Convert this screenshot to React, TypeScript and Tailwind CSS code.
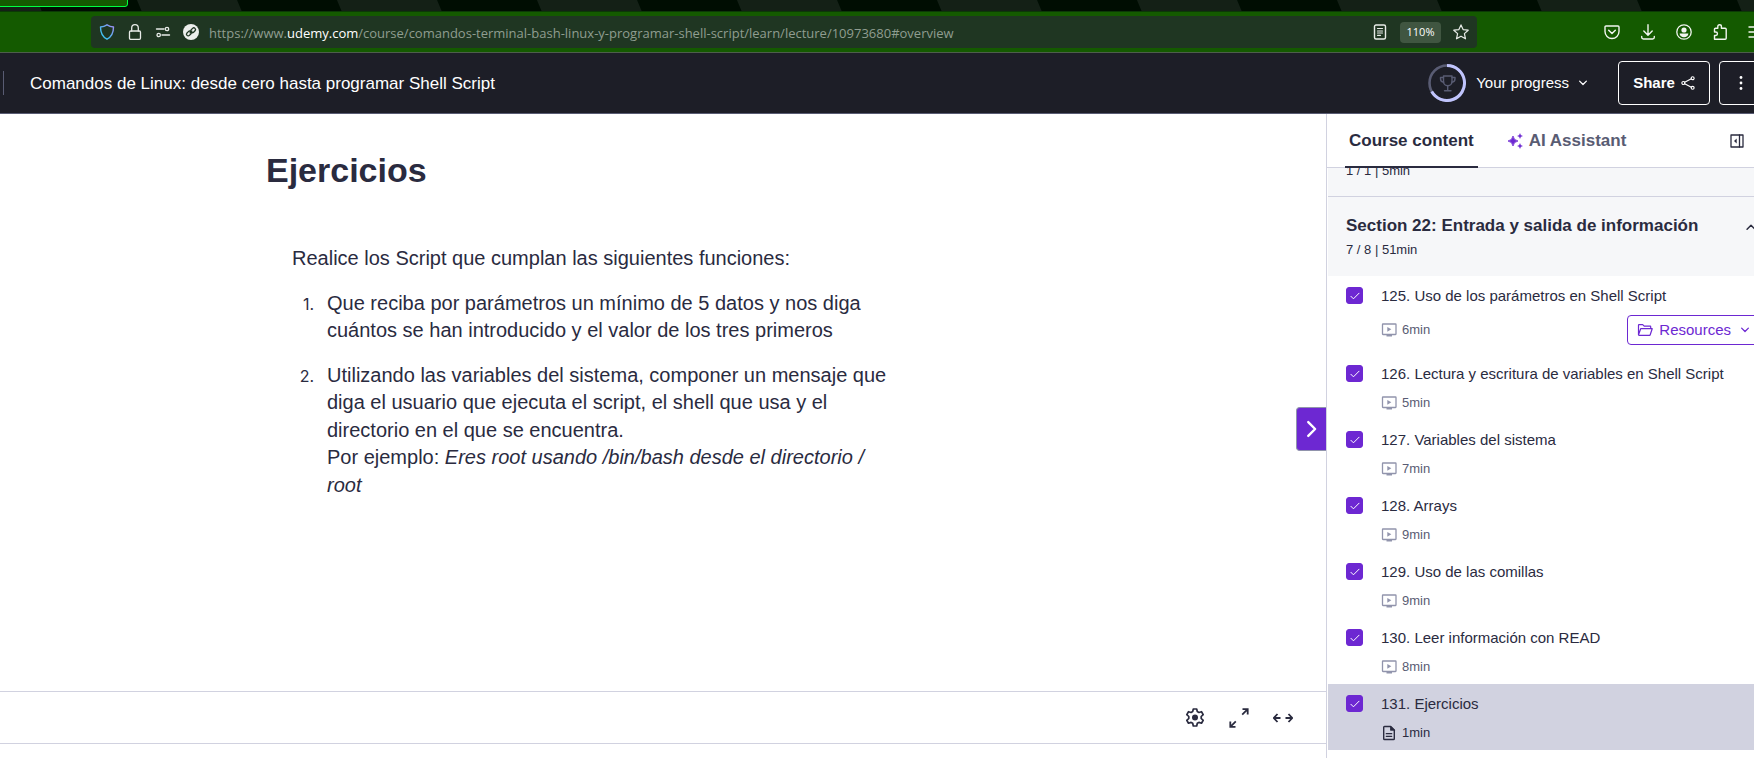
import type { ReactNode } from "react";

type Lecture = {
  id: number;
  title: string;
  minutes: number;
  kind: "video" | "article";
  resources?: boolean;
  current?: boolean;
};

const lectures: Lecture[] = [
  { id: 125, title: "Uso de los parámetros en Shell Script", minutes: 6, kind: "video", resources: true },
  { id: 126, title: "Lectura y escritura de variables en Shell Script", minutes: 5, kind: "video" },
  { id: 127, title: "Variables del sistema", minutes: 7, kind: "video" },
  { id: 128, title: "Arrays", minutes: 9, kind: "video" },
  { id: 129, title: "Uso de las comillas", minutes: 9, kind: "video" },
  { id: 130, title: "Leer información con READ", minutes: 8, kind: "video" },
  { id: 131, title: "Ejercicios", minutes: 1, kind: "article", current: true },
];

function Icon({ className, children, box = 16 }: { className: string; children: ReactNode; box?: number }) {
  return (
    <svg
      className={className}
      viewBox={`0 0 ${box} ${box}`}
      fill="none"
      stroke="currentColor"
      strokeLinecap="round"
      strokeLinejoin="round"
      aria-hidden="true"
    >
      {children}
    </svg>
  );
}

function Chevron({ className, up = false }: { className: string; up?: boolean }) {
  return (
    <Icon className={className}>
      <path d={up ? "M3.5 10.5 8 6l4.5 4.5" : "M3.5 5.5 8 10l4.5-4.5"} strokeWidth="1.7" />
    </Icon>
  );
}

function VideoIcon() {
  return (
    <Icon className="size-4 text-[#9194ac]">
      <rect x="1.5" y="2" width="13.5" height="10.5" rx="0.5" strokeWidth="1.3" />
      <path d="M6.3 4.9v4.8L10.3 7.3z" fill="currentColor" stroke="none" />
      <path d="M5.5 13h5.5v1.5H5.5z" fill="currentColor" stroke="none" />
    </Icon>
  );
}

function ArticleIcon() {
  return (
    <Icon className="size-4 text-[#2a2b3f]">
      <path d="M9.7 1.5H3.5a.8.8 0 0 0-.8.8v11.4c0 .5.3.8.8.8h9c.5 0 .8-.3.8-.8V5.1z" strokeWidth="1.4" />
      <path d="M9.5 1.5v3.8h3.8z" fill="currentColor" strokeWidth="0.8" />
      <path d="M5.3 8.7h5.4M5.3 11.3h5.4" strokeWidth="1.3" />
    </Icon>
  );
}

function BrowserBar() {
  return (
    <div className="font-['Open_Sans',sans-serif]">
      <div className="flex h-3 overflow-hidden border-b border-[#0b3a05] bg-[#142016]">
        <svg className="h-3 w-full" aria-hidden="true">
          <defs>
            <pattern id="stripes" width="200" height="12" patternUnits="userSpaceOnUse">
              <path d="M37 0h100l5 12H42z" fill="#000d02" />
            </pattern>
          </defs>
          <rect width="100%" height="12" fill="url(#stripes)" />
          <path d="M-4-4v10.5h129a2.5 2.5 0 0 0 2.5-2.5v-8z" fill="#145a00" stroke="#00ff41" />
        </svg>
      </div>
      <nav aria-label="Browser" className="-mr-[10px] flex h-[41px] items-center border-b border-[#4d5f4b] bg-[#145a00]">
        <div className="mr-[127px] ml-[91px] flex h-8 flex-1 items-center rounded bg-[#1f3622] text-[#e8ece8]">
          <svg className="ml-2 size-4" viewBox="0 0 16 16" fill="none" aria-hidden="true">
            <defs>
              <linearGradient id="shield" x1="1" y1="0" x2="0" y2="1">
                <stop offset="0" stopColor="#a48cf5" />
                <stop offset="0.6" stopColor="#4fb4ef" />
                <stop offset="1" stopColor="#2fd3f5" />
              </linearGradient>
            </defs>
            <path
              d="M8 .8c2 1.3 4.2 2 6.5 2.2 0 5.7-1.7 9.7-6.5 12.2C3.2 12.7 1.5 8.7 1.5 3 3.8 2.8 6 2.1 8 .8z"
              stroke="url(#shield)"
              strokeWidth="1.4"
              strokeLinejoin="round"
            />
          </svg>
          <Icon className="ml-3 size-4">
            <rect x="2.5" y="7" width="11" height="8.3" rx="1.2" strokeWidth="1.3" />
            <path d="M4.7 7V4a3.3 3.3 0 0 1 6.6 0v3" strokeWidth="1.3" />
          </Icon>
          <Icon className="ml-3 size-4">
            <path d="M1.5 5h7.5M7 11h7.5" strokeWidth="1.4" />
            <circle cx="12" cy="5" r="1.7" strokeWidth="1.3" />
            <circle cx="3.7" cy="11" r="1.7" strokeWidth="1.3" />
          </Icon>
          <svg className="ml-3 size-4" viewBox="0 0 16 16" fill="none" aria-hidden="true">
            <circle cx="8" cy="8" r="8" fill="#ecefec" />
            <g stroke="#1f3622" strokeWidth="1.3">
              <rect x="3.2" y="7.8" width="5.4" height="3.4" rx="1.7" transform="rotate(-45 5.9 9.5)" />
              <rect x="7.4" y="4.6" width="5.4" height="3.4" rx="1.7" transform="rotate(-45 10.1 6.3)" />
              <path d="M6.7 9.3l2.6-2.6" />
            </g>
          </svg>
          <a
            href="#overview"
            className="ml-[10px] flex-1 overflow-hidden pt-0.5 text-[13px] leading-5 whitespace-nowrap text-[#8f9d90]"
          >
            https://www.<span className="text-white">udemy.com</span>
            /course/comandos-terminal-bash-linux-y-programar-shell-script/learn/lecture/10973680#overview
          </a>
          <button type="button" aria-label="Reader view" className="shrink-0">
            <Icon className="size-4">
              <rect x="2.5" y="1" width="11" height="14" rx="1.5" strokeWidth="1.4" />
              <path d="M5.5 4.5h5M5.5 7h5M5.5 9h5M5.5 11.3h3" strokeWidth="1.2" />
            </Icon>
          </button>
          <button type="button" className="mx-3 h-[21px] w-[41px] shrink-0 rounded-sm bg-[#405641] text-[11px] leading-5 text-white">
            110%
          </button>
          <button type="button" aria-label="Bookmark this page" className="mr-2 shrink-0">
            <Icon className="size-4">
              <path
                d="m8 .9 2.1 4.7 5.1.6-3.8 3.4 1.1 5.2L8 12.2l-4.5 2.6 1.1-5.2L.8 6.2l5.1-.6z"
                strokeWidth="1.2"
              />
            </Icon>
          </button>
        </div>
        <div className="flex items-center gap-5 text-[#f2f6f0]">
          <button type="button" aria-label="Save to Pocket">
            <Icon className="size-4">
              <path d="M2 2h12a1 1 0 0 1 1 1v4.5a7 7 0 0 1-14 0V3a1 1 0 0 1 1-1z" strokeWidth="1.4" />
              <path d="M4.7 6.3 8 9.5l3.3-3.2" strokeWidth="1.5" />
            </Icon>
          </button>
          <button type="button" aria-label="Downloads">
            <Icon className="size-4">
              <path d="M8 .8V11M3.8 7 8 11.2 12.2 7M1.7 12.5v.8c0 1 .6 1.7 1.7 1.7h9.2c1.1 0 1.7-.7 1.7-1.7v-.8" strokeWidth="1.4" />
            </Icon>
          </button>
          <button type="button" aria-label="Account">
            <Icon className="size-4">
              <circle cx="8" cy="8" r="7.2" strokeWidth="1.3" />
              <circle cx="8" cy="6" r="2.6" fill="currentColor" stroke="none" />
              <path d="M3.6 9.5h8.8c-.2 2.5-2 3.8-4.4 3.8s-4.2-1.3-4.4-3.8z" fill="currentColor" stroke="none" />
            </Icon>
          </button>
          <button type="button" aria-label="Extensions">
            <Icon className="size-4">
              <path
                d="M2.5 15.2V11.5h1.2a1.7 1.7 0 0 0 0-3.5H2.5V5.3c0-.7.4-1 1-1h2.3V2.5a1.8 1.8 0 0 1 3.6 0v1.8h3.8c.7 0 1 .4 1 1v8.9c0 .7-.4 1-1 1z"
                strokeWidth="1.4"
              />
            </Icon>
          </button>
          <button type="button" aria-label="Menu">
            <Icon className="size-4">
              <path d="M1 3h14M1 8h14M1 13h14" strokeWidth="1.4" />
            </Icon>
          </button>
        </div>
      </nav>
    </div>
  );
}

function CourseHeader() {
  return (
    <header className="-mr-[9px] flex h-[61px] items-center border-b border-[#595c73] bg-[#1d1e27] text-white">
      <div className="ml-[3px] h-6 w-px bg-[#595c73]" />
      <h1 className="ml-[26px] pt-0.5 text-[17px] leading-6">
        <a href="#course">Comandos de Linux: desde cero hasta programar Shell Script</a>
      </h1>
      <button type="button" className="ml-auto flex items-center text-[15px]">
        <svg className="size-[38px]" viewBox="0 0 38 38" fill="none" aria-hidden="true">
          <circle cx="19" cy="19" r="17.5" stroke="#595c73" strokeWidth="2.6" />
          <path d="M19 1.5a17.5 17.5 0 1 1-15.3 26" stroke="#c0c4fc" strokeWidth="3" />
          <g stroke="#595c73" strokeWidth="1.4" strokeLinecap="round" strokeLinejoin="round">
            <path d="M15.5 12h8.5v5.5a4.25 4.25 0 0 1-8.5 0z" />
            <path d="M15.5 13.5h-3v1.3c0 2 1.2 3.2 3.2 3.4M24 13.5h3v1.3c0 2-1.2 3.2-3.2 3.4M19.7 21.8v4.7M16.5 26.7h6.5" />
          </g>
        </svg>
        <span className="ml-[10px]">Your progress</span>
        <Chevron className="ml-2 size-3" />
      </button>
      <button
        type="button"
        className="ml-[29px] flex h-11 w-[92px] items-center justify-center gap-1.5 rounded border border-white text-[15px] font-bold"
      >
        Share
        <Icon className="size-[14px]">
          <path d="M4.2 7.2 11.8 3.2M4.2 8.8l7.6 4" strokeWidth="1.3" />
          <circle cx="2.7" cy="8" r="1.7" strokeWidth="1.3" />
          <circle cx="13.3" cy="2.5" r="1.7" strokeWidth="1.3" />
          <circle cx="13.3" cy="13.5" r="1.7" strokeWidth="1.3" />
        </Icon>
      </button>
      <button
        type="button"
        aria-label="More options"
        className="ml-[9px] flex size-11 items-center justify-center rounded border border-white"
      >
        <svg className="size-4" viewBox="0 0 16 16" fill="currentColor" aria-hidden="true">
          <circle cx="8" cy="2.5" r="1.4" />
          <circle cx="8" cy="8" r="1.4" />
          <circle cx="8" cy="13.5" r="1.4" />
        </svg>
      </button>
    </header>
  );
}

function Exercise() {
  return (
    <article className="flex-1 pl-[266px]">
      <h2 className="mt-[35px] text-[34px] leading-[42px] font-bold">Ejercicios</h2>
      <div className="mt-[54px] mb-14 ml-[26px] max-w-[600px] text-xl leading-snug">
        <p>Realice los Script que cumplan las siguientes funciones:</p>
        <ol className="mt-[17px] flex flex-col gap-[17px]">
          <li className="flex">
            <span className="w-[22px] shrink-0 text-right font-['Inter',sans-serif] text-base leading-7">1.</span>
            <p className="ml-[13px]">
              Que reciba por parámetros un mínimo de 5 datos y nos diga cuántos se han introducido y el valor de los
              tres primeros
            </p>
          </li>
          <li className="flex">
            <span className="w-[22px] shrink-0 text-right font-['Inter',sans-serif] text-base leading-7">2.</span>
            <p className="ml-[13px]">
              Utilizando las variables del sistema, componer un mensaje que diga el usuario que ejecuta el script, el
              shell que usa y el directorio en el que se encuentra.
              <br />
              Por ejemplo:{" "}
              <em>
                Eres root usando /bin/bash desde el directorio /<wbr />
                root
              </em>
            </p>
          </li>
        </ol>
      </div>
    </article>
  );
}

function PlayerControls() {
  return (
    <div className="flex h-[53px] items-center justify-end gap-6 border-y border-[#d1d2e0] pr-[33px]">
      <button type="button" aria-label="Settings">
        <Icon className="size-5" box={20}>
          <path
            d="M8.3 1h3.4l.6 2.6 1.6.9 2.6-.8 1.7 2.9-2 1.9v1.9l2 1.9-1.7 2.9-2.6-.8-1.6.9-.6 2.7H8.3l-.6-2.7-1.6-.9-2.6.8-1.7-2.9 2-1.9V8.5l-2-1.9 1.7-2.9 2.6.8 1.6-.9z"
            strokeWidth="1.7"
          />
          <circle cx="10" cy="9.6" r="3" fill="currentColor" stroke="none" />
        </Icon>
      </button>
      <button type="button" aria-label="Expand view">
        <Icon className="size-5" box={20}>
          <path d="M13.5 1.2h5.2v5.2M18.2 1.7l-5 5M1.3 13.6v5.2h5.2M1.8 18.3l5-5" strokeWidth="1.8" strokeLinecap="butt" strokeLinejoin="miter" />
        </Icon>
      </button>
      <button type="button" aria-label="Wide view">
        <Icon className="size-5" box={20}>
          <path d="M4.5 6 .8 10l3.7 4M1 10h6.5M15.5 6l3.7 4-3.7 4M19 10h-6.5" strokeWidth="1.8" strokeLinecap="butt" strokeLinejoin="miter" />
        </Icon>
      </button>
    </div>
  );
}

function LectureRow({ lecture }: { lecture: Lecture }) {
  const inputId = `lecture-${lecture.id}`;
  return (
    <li className={lecture.current ? "flex bg-[#d1d2e0] pr-4 pl-[18px]" : "flex pr-4 pl-[18px]"}>
      <span className="mt-[11px] grid size-[17px] shrink-0 place-items-center">
        <input
          id={inputId}
          type="checkbox"
          defaultChecked
          className="peer size-[17px] appearance-none rounded-[3px] border border-[#6d28d2] [grid-area:1/1] checked:bg-[#6d28d2]"
        />
        <Icon className="pointer-events-none size-[10px] text-white opacity-0 [grid-area:1/1] peer-checked:opacity-100">
          <path d="M1.5 8.5 5.5 12.5 14.5 3.5" strokeWidth="1.6" />
        </Icon>
      </span>
      <div className="ml-[18px] flex-1">
        <label htmlFor={inputId} className="mt-[9px] block text-[15px] leading-[22px] whitespace-nowrap">
          {lecture.id}. {lecture.title}
        </label>
        <div className={lecture.resources ? "mt-2 mb-[9px] flex h-[30px] items-center" : "mt-2 mb-[7px] flex h-5 items-center"}>
          {lecture.kind === "video" ? <VideoIcon /> : <ArticleIcon />}
          <span className={lecture.current ? "ml-[5px] text-[13px]" : "ml-[5px] text-[13px] text-[#595c73]"}>
            {lecture.minutes}min
          </span>
          {lecture.resources && (
            <button
              type="button"
              className="ml-auto flex h-[30px] items-center rounded border border-[#6d28d2] px-[9px] text-[15px] text-[#6d28d2]"
            >
              <Icon className="size-4">
                <path d="M1.5 12.8V3.2c0-.3.2-.5.5-.5h3.7l1.5 1.5h6c.3 0 .5.2.5.5v2M1.5 12.8l2.2-6.1h11.5l-2 6.1c-.1.3-.3.5-.6.5H2c-.3 0-.5-.2-.5-.5z" strokeWidth="1.2" />
              </Icon>
              <span className="ml-1.5">Resources</span>
              <Chevron className="ml-2 size-3" />
            </button>
          )}
        </div>
      </div>
    </li>
  );
}

function Sidebar() {
  return (
    <aside className="flex w-[428px] shrink-0 flex-col overflow-hidden border-l border-[#d1d2e0]">
      <div className="flex h-[54px] border-b border-[#d1d2e0] pl-[18px] text-[17px] font-bold">
        <button type="button" className="-mb-px border-b-2 border-[#2a2b3f] px-1 pt-0.5">
          Course content
        </button>
        <button type="button" className="ml-[29px] flex items-center text-[#595c73]">
          <svg className="size-4 text-[#6d28d2]" viewBox="0 0 16 16" fill="currentColor" aria-hidden="true">
            <path d="M6 3Q6.7 7.3 11 8 6.7 8.7 6 13 5.3 8.7 1 8 5.3 7.3 6 3z" stroke="currentColor" strokeWidth="0.8" />
            <path d="M13 .5q.4 2.1 2.5 2.5-2.1.4-2.5 2.5-.4-2.1-2.5-2.5 2.1-.4 2.5-2.5zM13 10.5q.4 2.1 2.5 2.5-2.1.4-2.5 2.5-.4-2.1-2.5-2.5 2.1-.4 2.5-2.5z" stroke="currentColor" strokeWidth="0.3" />
          </svg>
          <span className="ml-1.5">AI Assistant</span>
        </button>
        <button type="button" aria-label="Collapse sidebar" className="mr-[9px] ml-auto">
          <Icon className="size-4">
            <rect x="2" y="2" width="12" height="12" strokeWidth="1.3" />
            <path d="M10.5 2v12" strokeWidth="1.3" />
            <path d="M7.7 5.5v5L5 8z" fill="currentColor" stroke="none" />
          </Icon>
        </button>
      </div>
      <div className="-mr-[23px] ml-px">
        <div className="flex h-[29px] flex-col justify-end overflow-hidden border-b border-[#d1d2e0] bg-[#f6f7f9] pb-[15px] pl-[18px] text-[13px] leading-5">
          1 / 1 | 5min
        </div>
        <section>
          <button type="button" className="flex w-full items-center bg-[#f6f7f9] pt-[17px] pr-[19px] pb-4 pl-[18px] text-left">
            <span className="flex flex-1 flex-col gap-0.5">
              <span className="text-[17px] leading-6 font-bold">Section 22: Entrada y salida de información</span>
              <span className="text-[13px] leading-5">7 / 8 | 51min</span>
            </span>
            <Chevron up className="mb-5 size-[14px]" />
          </button>
          <ul>
            {lectures.map((lecture) => (
              <LectureRow key={lecture.id} lecture={lecture} />
            ))}
          </ul>
        </section>
      </div>
    </aside>
  );
}

export default function App() {
  return (
    <div className="flex min-h-screen flex-col overflow-x-hidden bg-white font-['Liberation_Sans',Arial,sans-serif] text-[#2a2b3f]">
      <BrowserBar />
      <CourseHeader />
      <div className="flex flex-1">
        <main className="relative flex min-w-0 flex-1 flex-col pb-[14px]">
          <Exercise />
          <PlayerControls />
          <button
            type="button"
            aria-label="Next lecture"
            className="absolute top-[293px] right-0 flex h-11 w-[30px] items-center justify-center rounded-l border border-r-0 border-[#9194ac] bg-[#6d28d2] text-white"
          >
            <Icon className="size-5">
              <path d="m5 2.5 5.5 5.5-5.5 5.5" strokeWidth="1.9" />
            </Icon>
          </button>
        </main>
        <Sidebar />
      </div>
    </div>
  );
}
